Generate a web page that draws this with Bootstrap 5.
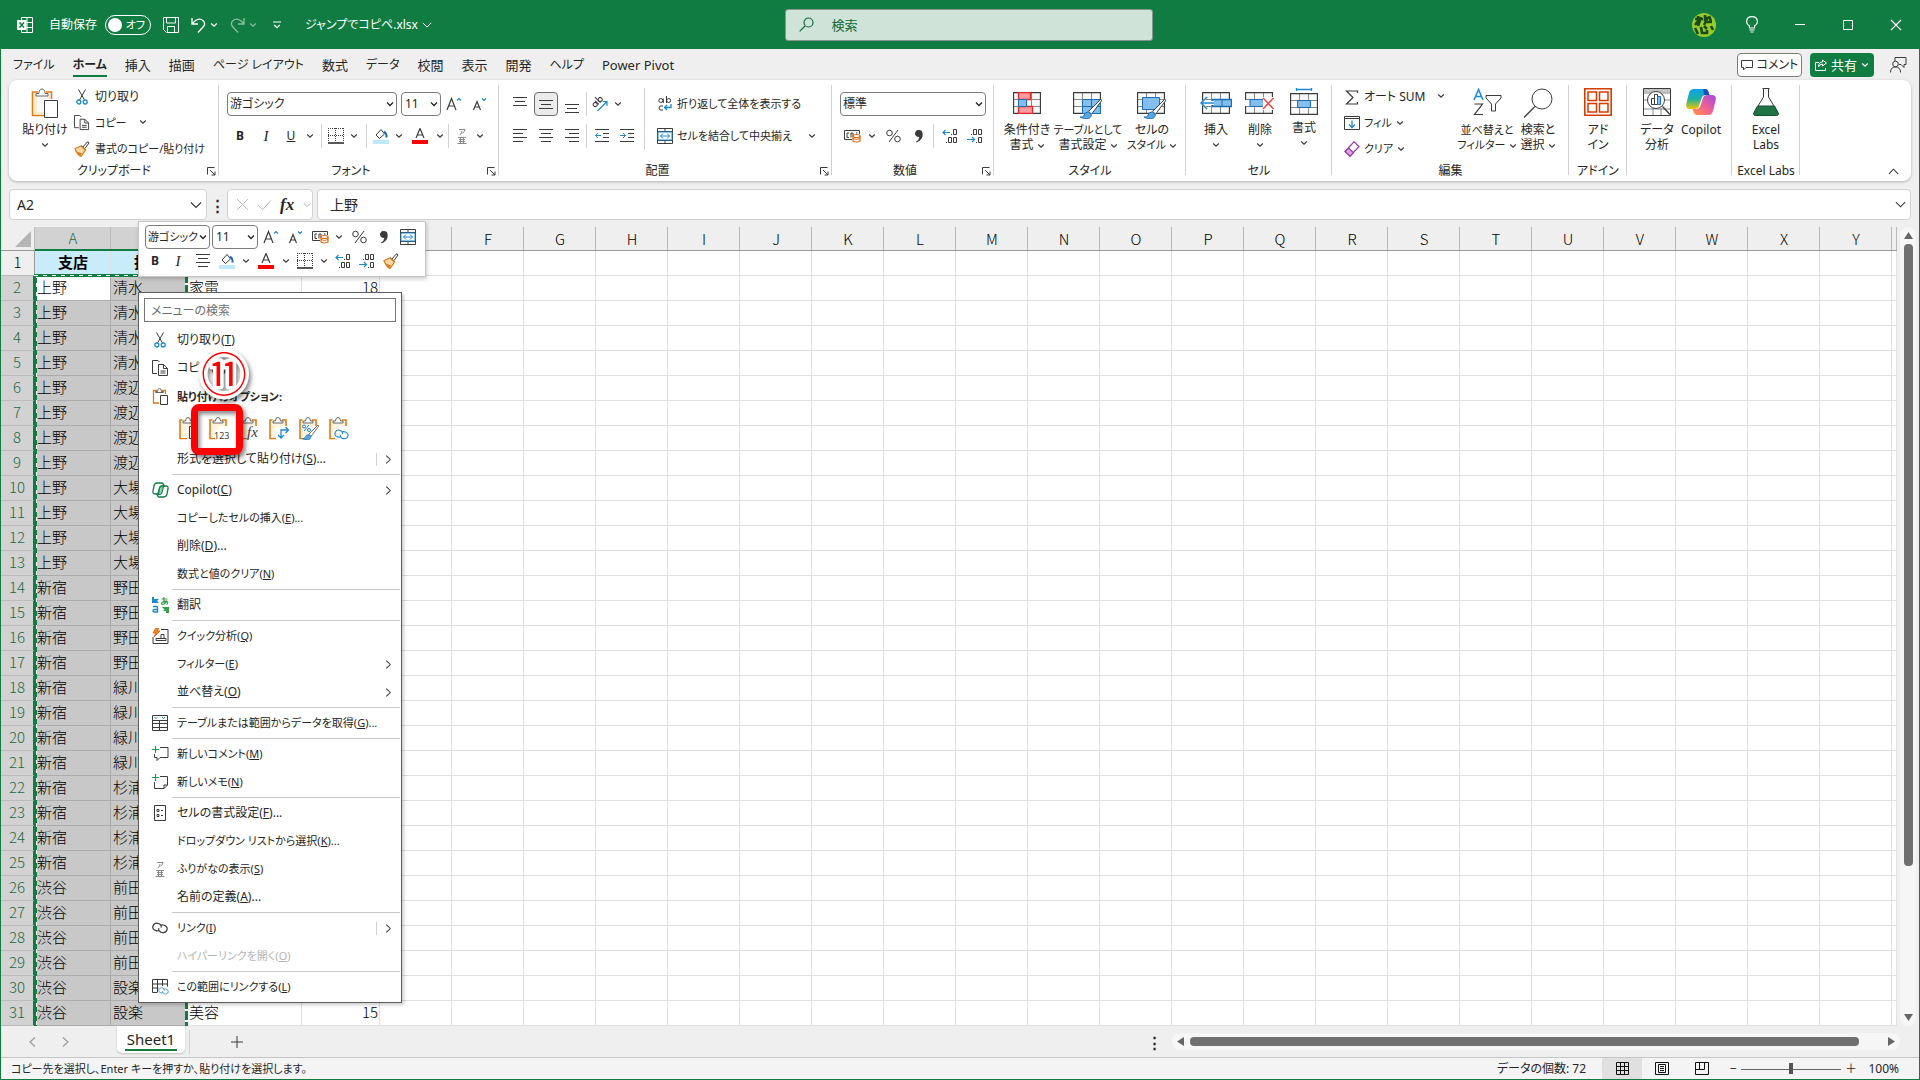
<!DOCTYPE html>
<html lang="ja">
<head>
<meta charset="utf-8">
<meta name="viewport" content="width=device-width, initial-scale=1">
<title>ジャンプでコピペ.xlsx - Excel</title>
<link href="https://cdn.jsdelivr.net/npm/bootstrap@5.3.0/dist/css/bootstrap.min.css" rel="stylesheet">
<style>
:root{--xl:#107c41;--ink:#262626;--line:#d1d1d1;--blue:#1e88d0}
body{font:12px/16px "Noto Sans","Noto Sans CJK JP",sans-serif;font-feature-settings:"palt";color:var(--ink);background:#efefef;overflow-x:hidden}
button{font:inherit;font-feature-settings:inherit;color:inherit;background:none;border:0;padding:0}
svg{display:block;flex:none;overflow:visible;fill:none;stroke:#3b3b3b}
svg.blu{stroke:#1e88d0}
svg text{stroke:none;fill:#3b3b3b}
a{color:inherit;text-decoration:none}
.tight{font-size:11px}
.g12{margin-left:12px}
.side{flex:1 1 0}
.window-frame{min-height:100vh;border:1px solid var(--xl);border-top:0;position:relative}
.titlebar{background:var(--xl);color:#fff;height:49px;margin:0 -1px;padding-left:17px}
.titlebar svg{stroke:#fff}
.switch-label{width:46px;height:20px;border:1px solid #fff;border-radius:10px;padding:0 5px 0 2px}
.switch-label input{appearance:none;width:14px;height:14px;border-radius:50%;background:#fff;margin:0}
.title-search{width:368px;height:32px;border:1px solid #87958d;border-radius:3px;background:#cfe3d8;color:#106b3a;padding:0 13px}
.title-search input{border:0;background:none;outline:0;width:280px;color:#106b3a;font-size:13px;font-feature-settings:inherit}
.title-search input::placeholder{color:#106b3a;opacity:1}
.title-search svg{stroke:#106b3a}
.win-btn{width:48px;height:48px}
.tabs{height:31px;padding:0 8px 0 12px}
.tabs .nav{column-gap:18px}
.tabs .nav-link{padding:0;height:28px;line-height:32px;font-size:13px;color:var(--ink)}
.tabs .nav-link.kana{font-size:12px}
.tabs .nav-link.active{font-weight:700;border-bottom:2px solid var(--xl)}
.top-btn{height:24px;border-radius:4px}
.comment-btn{border:1px solid #7d7d7d;background:#fff;width:65px}
.share-btn{background:var(--xl);color:#fff;width:64px;font-size:13px}
.share-btn svg{stroke:#fff}
.ribbon{background:#fff;border-radius:8px;height:101px;margin:0 8px;box-shadow:0 1px 3px #0004}
.rgroup{position:relative;padding-top:4px}
.rgroup::after{content:"";position:absolute;right:0;top:5px;height:90px;border-right:1px solid var(--line)}
.rbody{height:78px}
.rlabel{height:17px;line-height:17px}
.launcher{position:absolute;right:3px;top:87px}
.w-clip{width:210px}.w-font{width:280px}.w-align{width:333px}.w-num{width:162px}.w-style{width:192px}.w-cell{width:146px}.w-edit{width:237px}.w-addin{width:58px}.w-data{width:105px}.w-labs{width:68px}
.big-btn{line-height:15px;text-align:center;display:flex;flex-direction:column;align-items:center;padding-top:4px;white-space:nowrap}
.big-btn .lbl{margin-top:4px}
.big-btn .lbl2{margin-top:6px}
.bw-l{width:64px}.bw-m{width:58px}.bw-s{width:44px}
.edit-col{width:118px}
.row-btn{display:flex;align-items:center;gap:4px;height:26px;white-space:nowrap}
.tool-row{display:flex;align-items:center;height:32px}
.ib{width:26px;height:24px;display:flex;align-items:center;justify-content:center;flex:none}
.ib20{width:20px}.ib24{width:24px}
.cv{width:16px;height:24px;display:flex;align-items:center;justify-content:center;flex:none}
.cv.slim{width:14px}
.ib.on{border:1px solid #6b6b6b;border-radius:4px;background:#ebebeb;width:24px;margin:0 1px}
.ib.ital{font:italic 15px "Liberation Serif",serif}
.vsep{width:9px;height:24px;flex:none;background:linear-gradient(var(--line),var(--line)) 4px 0/1px 100% no-repeat}
.vsep.slim{width:5px;background-position:1px 0}
.vsep.tall{height:62px}
.combo{height:24px;border:1px solid #7d7d7d;border-radius:4px;background:#fff url("data:image/svg+xml,%3Csvg xmlns='http://www.w3.org/2000/svg' viewBox='0 0 8 8'%3E%3Cpath d='M1 2.5 4 5.500 7 2.500' fill='none' stroke='%23222' stroke-width='1.300'/%3E%3C/svg%3E") right 2px center/8px 8px no-repeat;appearance:none;padding:0 10px 0 2px;font-size:12px;line-height:20px;color:var(--ink);font-feature-settings:inherit}
.c-font{width:170px}.c-size{width:40px;padding-left:3px}.c-num{width:146px}.c-mini{width:67px;font-size:11px}.c-msize{width:50px;padding-left:3px;margin-left:2px}
.fbar{padding:8px 8px 7px}
.fbox{background:#fff;border:1px solid var(--line);border-radius:4px;height:31px}
.namebox{width:198px;padding:0 4px 0 7px}
.fdots{width:20px;text-align:center;font-weight:700;font-size:15px}
.fxbox{width:86px;padding:0 1px 0 8px}
.fxmark{font:italic 700 17px "Liberation Serif",serif}
.fbox input{border:0;outline:0;background:none;font-size:14px;min-width:0;padding:0;color:var(--ink)}
.sheet-area{position:relative;min-width:0}
.grid{table-layout:fixed;width:100%;border-collapse:separate;border-spacing:0;font-size:15px;line-height:20px;background:#fff;font-family:"Noto Sans CJK JP",sans-serif;font-feature-settings:normal;color:#000}
.grid th,.grid td{height:25px;padding:0 1px 2px 2px;border-right:1px solid #e0e0e0;border-bottom:1px solid #e0e0e0;font-weight:300;overflow:hidden;white-space:nowrap}
.grid thead th{height:24px;text-align:center;background:linear-gradient(#bbb,#bbb) right/1px 100% no-repeat #efefef;border-right:0;border-bottom:1px solid #9a9a9a;padding:0}
.grid thead th.hot{background-color:#d2d2d2;border-bottom:2px solid var(--xl);color:#1e6b45}
.grid tbody th{text-align:center;background:#efefef;border-right:1px solid #9a9a9a;border-bottom-color:#bbb;padding:0 0 2px}
.grid tbody tr.hot th{background:#d2d2d2;color:#1e6b45;border-right:2px solid var(--xl)}
.grid tr.hot td.sel{background:#c8c8c8;border-color:#acacac}
.grid tr.hot td.cur{background:#fff}
.grid td.cap{background:#c9ecfb;text-align:center;font-weight:700}
.k-rh{width:34px}.k-a{width:76px}.k-c{width:115px}.k-d{width:78px}.k-n{width:72px}
.ants{position:absolute;left:33px;top:47px;width:154px;bottom:0;pointer-events:none;background:
 repeating-linear-gradient(90deg,#fff 0 4px,#107c41 4px 9px) 0 1px/100% 1px no-repeat,
 linear-gradient(#107c41,#107c41) 0 0/100% 3px no-repeat,
 repeating-linear-gradient(#fff 0 4px,#107c41 4px 9px) 2px 0/1px 100% no-repeat,
 linear-gradient(#107c41,#107c41) 0 0/3px 100% no-repeat,
 repeating-linear-gradient(#107c41 0 9px,#fff 9px 11px) 100% 0/3px 100% no-repeat}
.vscroll{width:22px;flex:none}
.vtrack{width:16px;border-radius:8px;background:#f6f6f6}
.vthumb{width:9px;border-radius:4px;background:#707070;flex:0 0 622px}
.sheetbar{height:31px}
.nav-l{margin-left:28px}.nav-r{margin-left:26px}.nav-add{margin-left:37px}
.sheet-tab{background:#fff;border-radius:0 0 5px 5px;width:68px;height:27px;box-shadow:0 1px 2px #0003;font-size:15px;line-height:20px}
.sheet-tab span{border-bottom:2px solid var(--xl);padding:0 2px}
.hscroll{width:728px;height:17px;border-radius:8px;background:#f6f6f6;margin-right:19px;padding:0 5px}
.hthumb{height:9px;border-radius:4px;background:#707070;width:669px;margin-left:6px}
.statusbar{height:22px;border-top:1px solid #c6c6c6;background:#f4f4f4;padding:0 20px 0 10px}
.view-btn{width:40px;height:21px;display:flex;align-items:center;justify-content:center}
.view-btn.on{background:#e0e0e0}
.zoom-range{appearance:none;width:100px;height:12px;background:linear-gradient(#666,#666) 0 6px/100% 1px no-repeat;margin:0 4px}
.zoom-range::-webkit-slider-thumb{appearance:none;width:4px;height:11px;background:#555}
.pct-label{width:34px}
.mini{position:absolute;left:137px;top:221px;width:288px;height:56px;background:#fff;border:1px solid #c6c6c6;box-shadow:1px 2px 4px #0003;padding:3px 5px 0 6px;z-index:3}
.mini-row{display:flex;align-items:center;height:24px}
.ctx{position:absolute;left:137px;top:292px;width:264px;background:#fff;border:1px solid #5e5e5e;box-shadow:2px 2px 3px #0003;padding:5px 1px 1px 5px;z-index:4}
.ctx-search{width:252px;height:24px;border:1px solid #767676;padding:0 6px;font-size:12px;margin-bottom:4px;display:block;font-feature-settings:inherit;outline:0}
.ctx-search::placeholder{color:#6e6e6e;opacity:1}
.mi{display:flex;align-items:center;height:28px;width:100%;text-align:left;white-space:nowrap}
.mi.head{height:30px;font-weight:700;font-size:11px}
.mi .ic{width:33px;height:20px;flex:none;display:flex;align-items:center;justify-content:center;padding-right:1px}
.mi .go{margin-left:auto;padding-right:8px;display:flex;gap:8px;align-items:center}
.mi .go.split::before{content:"";height:13px;border-left:1px solid var(--line)}
.mi[disabled]{color:#b5b5b5}
.mhr{height:3px;margin-left:28px;background:linear-gradient(#c9c9c9,#c9c9c9) 0 1px/100% 1px no-repeat}
.opts{display:flex;gap:10px;height:33px;padding-left:35px}
.mark-box{position:absolute;left:190px;top:404px;width:52px;height:51px;border:7px solid #f00;border-radius:8px;box-shadow:2px 3px 5px #0008,inset 2px 3px 4px #0007;z-index:5}
.mark-num{position:absolute;left:198px;top:349px;z-index:6;filter:drop-shadow(2px 3px 2px #0007)}
.mark-num text{font:400 46px "Noto Sans CJK JP",sans-serif;fill:#f00;stroke:#fff;stroke-width:7px;stroke-linejoin:round;paint-order:stroke}
</style>
</head>
<body>
<svg width="0" height="0" class="position-absolute">
<defs>
<linearGradient id="cpA" x1="0" y1="0" x2="0" y2="1"><stop offset="0" stop-color="#0aa2e8"/><stop offset=".5" stop-color="#1cb0a0"/><stop offset="1" stop-color="#f3c500"/></linearGradient>
<linearGradient id="cpB" x1="1" y1="0" x2="0" y2="1"><stop offset="0" stop-color="#a049e8"/><stop offset=".55" stop-color="#f2638c"/><stop offset="1" stop-color="#ff9a45"/></linearGradient>
<symbol id="cv" viewBox="0 0 8 8"><path d="M1.200 2.500 4 5.200 6.800 2.500" stroke-width="1.200"/></symbol>
<symbol id="cvb" viewBox="0 0 12 12"><path d="M1 3.500 6 8.500 11 3.500" stroke-width="1.200"/></symbol>
<symbol id="cvr" viewBox="0 0 8 12"><path d="M1.500 1.500 6 6 1.500 10.500" stroke-width="1.200"/></symbol>
<symbol id="launch" viewBox="0 0 9 9"><path d="M.5 7.500v-7h7M3 3l5 5M8 4.500V8H4.500"/></symbol>
<symbol id="board" viewBox="0 0 28 30"><path d="M7 4H1.500v23.500H13M15 4h5.500v7" stroke="#e07b14" stroke-width="1.600"/><path d="M3 6h16v5h-6v15H3z" fill="#fdebc8" stroke="none"/><path d="M6 8h10v3h-3v13H6z" fill="#fafafa" stroke="none"/><path d="M5 8V5.500h3Q8 1 11 1t3 4.500h3V8z" fill="#fff" stroke="#666"/><path d="M13.500 12.500h13v17h-13z" fill="#fff"/></symbol>
<symbol id="board-s" viewBox="0 0 17 18"><path d="M5 2.500H1.500V15H7M10 2.500h3.500V6" stroke="#e07b14" stroke-width="1.300"/><path d="M3.500 4.500v-1h2Q5.500.500 7.500.500t2 3h2v1z" fill="#fff" stroke="#666"/><path d="M8.500 7.500h7v9h-7z" fill="#fff"/></symbol>
<symbol id="clip" viewBox="0 0 20 23"><path d="M3.500 3H1v18.500h7M13 3h4v6" stroke="#e07b14" stroke-width="1.600"/><path d="M2 5h14v4h-6v12H2z" fill="#fff4e0" stroke="none"/><path d="M4 6V4h2.500Q6.500.500 9 .500T11.500 4H14v2z" fill="#fff" stroke="#666"/></symbol>
<symbol id="cut" viewBox="0 0 12 16"><path d="M2.500.500 8.500 11M9.500.500 3.500 11"/><circle cx="2.800" cy="13" r="2" stroke="#1e88d0" stroke-width="1.300"/><circle cx="9.200" cy="13" r="2" stroke="#1e88d0" stroke-width="1.300"/></symbol>
<symbol id="copy" viewBox="0 0 17 17"><path d="M5 13.500H.500V.500h5.500l1.500 1.500"/><path d="M6.500 4.500h5l4 4v7h-9z" fill="#fff"/><path d="M11.500 4.500v4h4M8.500 11h5M8.500 13h5"/></symbol>
<symbol id="brush" viewBox="0 0 16 16"><path d="M9 6 13 1.200q1.500-1 2 .800L11 7.500M7 4.500l5 4.500" /><path d="M7 5 1 7.500q2 6 6 8L11.500 9z" fill="#fbd9a8" stroke="#dc7a17" stroke-width="1.200"/><path d="M3 10.500 8 12.500 6.500 15Q4 13.500 3 10.500z" fill="#dc7a17" stroke="none"/></symbol>
<symbol id="Aup" viewBox="0 0 16 14"><path d="M1 13 5.500 1.500 10 13M2.700 9h5.600" stroke-width="1.200"/><path d="M11 3.500 13 1.500 15 3.500" stroke="#1e88d0" stroke-width="1.200"/></symbol>
<symbol id="Adn" viewBox="0 0 16 14"><path d="M1.500 13 5 4.500 8.500 13M2.800 10h4.400" stroke-width="1.200"/><path d="M10 1.500 12 3.500 14 1.500" stroke="#1e88d0" stroke-width="1.200"/></symbol>
<symbol id="border" viewBox="0 0 16 16"><path d="M.5 0v14M15.500 0v14M0 .500h16M7.500 0v14M0 7.500h16" stroke-dasharray="1 1"/><path d="M0 15h16" stroke="#111" stroke-width="1.400"/></symbol>
<symbol id="fill" viewBox="0 0 16 16"><path d="M3 7 8 1.500 11.500 6 6.500 10.500z"/><path d="M11 3.500q3 2 2.500 6" stroke="#1b6db5" stroke-width="2"/><path d="M0 12h16v4H0z" fill="#bfe8fa" stroke="none"/></symbol>
<symbol id="fcol" viewBox="0 0 16 16"><path d="M4 10 8 .500 12 10M5.500 7h5" stroke-width="1.200"/><path d="M0 12h16v4H0z" fill="#f00" stroke="none"/></symbol>
<symbol id="ruby" viewBox="0 0 10 16"><path d="M2 1.500h6Q8 4 5.500 5M5 3q0 3-2.500 4M1 9.500h8M2 11.500h6M2 13.500h6M.500 15.500h9M3.500 9.500v6M6.500 9.500v6" stroke="#888"/></symbol>
<symbol id="al-t" viewBox="0 0 14 14"><path d="M0 .500h14M2 4.500h10M0 8.500h14"/></symbol>
<symbol id="al-m" viewBox="0 0 14 9"><path d="M0 .500h14M2 4.500h10M0 8.500h14"/></symbol>
<symbol id="al-l" viewBox="0 0 14 14"><path d="M0 .500h14M0 4.500h10M0 8.500h14M0 12.500h10"/></symbol>
<symbol id="al-c" viewBox="0 0 14 14"><path d="M0 .500h14M2 4.500h10M0 8.500h14M2 12.500h10"/></symbol>
<symbol id="al-r" viewBox="0 0 14 14"><path d="M0 .500h14M4 4.500h10M0 8.500h14M4 12.500h10"/></symbol>
<symbol id="ind-l" viewBox="0 0 14 14"><path d="M0 .500h14M8 4.500h6M8 8.500h6M0 12.500h14"/><path d="M6 6.500H.500M3 4 .500 6.500 3 9" stroke="#1e88d0"/></symbol>
<symbol id="ind-r" viewBox="0 0 14 14"><path d="M0 .500h14M8 4.500h6M8 8.500h6M0 12.500h14"/><path d="M0 6.500h5.500M3 4l2.500 2.500L3 9" stroke="#1e88d0"/></symbol>
<symbol id="orient" viewBox="0 0 16 16"><g transform="rotate(-45 5 6)"><circle cx="2" cy="6.500" r="2"/><path d="M4.500 4v5M7 1v8"/><circle cx="9" cy="6.500" r="2"/></g><path d="M5.500 15 15 5.500M10.500 5.500H15V10" stroke="#1e88d0" stroke-width="1.200"/></symbol>
<symbol id="wrap" viewBox="0 0 14 16"><circle cx="2.800" cy="4.500" r="2"/><path d="M5.300 2.500v4.500M8.500 0v7M5 10q-4-1-4 2t4 2"/><circle cx="10.700" cy="4.500" r="2"/><path d="M13 8v3.500H6.500M9 9l-2.500 2.500L9 14" stroke="#1e88d0" stroke-width="1.300"/></symbol>
<symbol id="merge" viewBox="0 0 16 16"><path d="M.500.500h15v15H.500zM.500 3.500h15M.500 12.500h15M8 .500v3M8 12.500v3"/><path d="M1 4h14v8H1z" fill="#fff" stroke="#1e88d0"/><path d="M3.500 8h9M6 5.500 3.500 8 6 10.500M10 5.500 12.500 8 10 10.500" stroke="#1e88d0"/></symbol>
<symbol id="money" viewBox="0 0 17 14"><path d="M8 10.500H.500V1.500h15V5"/><path d="M5 4H3v4.500h2M7 8.500V4h2v4M12 4h1.500"/><path d="M9 7v5q3.500 2 7 0V7" fill="#fff" stroke="#dc6a10" stroke-width="1.200"/><ellipse cx="12.500" cy="7" rx="3.500" ry="1.500" fill="#fff" stroke="#dc6a10" stroke-width="1.200"/><path d="M9 9.500q3.500 2 7 0" stroke="#dc6a10"/></symbol>
<symbol id="pct" viewBox="0 0 15 14"><circle cx="3.500" cy="4" r="2.800"/><circle cx="11.500" cy="10" r="2.800"/><path d="M12 1 3 13"/></symbol>
<symbol id="comma" viewBox="0 0 8 13"><path d="M4 0a3.500 3.500 0 1 0 .500 6.800Q4 10 1 11.500l.500 1Q8 10 7.700 4 7.500 0 4 0z" fill="#3b3b3b" stroke="none"/></symbol>
<symbol id="dec-l" viewBox="0 0 16 16"><path d="M8 4.500H1M3.500 2 1 4.500 3.500 7" stroke="#1e88d0" stroke-width="1.200"/><path d="M11.500 1.500h3v5h-3zM6.500 9.500h3v5h-3zM11.500 9.500h3v5h-3zM9 6.500h1M4 14.500h1"/></symbol>
<symbol id="dec-r" viewBox="0 0 16 16"><path d="M0 11.500h7M5 9l2.500 2.500L5 14" stroke="#1e88d0" stroke-width="1.200"/><path d="M6.500 1.500h3v5h-3zM11.500 1.500h3v5h-3zM11.500 9.500h3v5h-3zM4 6.500h1M9 14.500h1"/></symbol>
<symbol id="tbl" viewBox="0 0 28 22"><path d="M.500.500h27v21H.500z" fill="#fafafa" stroke="none"/><path d="M1 7.500h26M1 14.500h26M9.500 1v20M18.500 1v20" stroke="#8a8a8a"/><path d="M.500.500h27v21H.500z" stroke-width="1.300"/></symbol>
<symbol id="pbrush" viewBox="0 0 24 22"><path d="M21.500 1.500 9 14l3 3L22.500 3q.500-1.500-1-1.500z" fill="#fff"/><path d="M8.500 14.500q-4 .500-4.500 4-1.500 2-4 1.500 7 3.500 10.500.500 2-2 1-4z" fill="#5ba6e0" stroke="#1b6db5"/></symbol>
<symbol id="cond" viewBox="0 0 28 22"><use href="#tbl"/><path d="M5.500.500h12v7h-12zM5.500 14.500h14v7h-14z" fill="#ff9aa0" stroke="#e02a2a" stroke-width="1.300"/><path d="M5.500 7.500h8v7h-8z" fill="#83beec" stroke="#1b6db5"/></symbol>
<symbol id="tfmt" viewBox="0 0 31 28"><svg width="28" height="22"><use href="#tbl"/></svg><path d="M9.500 7.500h18v14h-18z" fill="#83beec" stroke="#1b6db5"/><path d="M9.500 14.500h18M18.500 7.500v14" stroke="#1b6db5"/><svg x="7" y="6" width="23" height="21"><use href="#pbrush"/></svg></symbol>
<symbol id="cfmt" viewBox="0 0 31 28"><svg width="28" height="22"><use href="#tbl"/></svg><path d="M5.500 5.500h17v12h-17z" fill="#83beec" stroke="#1b6db5"/><svg x="7" y="6" width="23" height="21"><use href="#pbrush"/></svg></symbol>
<symbol id="cins" viewBox="0 0 32 22"><svg x="2" width="28" height="22"><use href="#tbl"/></svg><path d="M12.500 7.500h19v7h-19z" fill="#83beec" stroke="#1b6db5" stroke-width="1.300"/><path d="M22 7.500v7" stroke="#1b6db5"/><path d="M14 9H6V5L0 11l6 6v-4h8z" fill="#fff" stroke="none"/><path d="M14 11H1M7 5 1 11l6 6" stroke="#1e88d0" stroke-width="1.500"/></symbol>
<symbol id="cdel" viewBox="0 0 30 22"><svg width="28" height="22"><use href="#tbl"/></svg><path d="M0 8h5v6H0z" fill="#fff" stroke="none"/><path d="M5 7.500h12l3.500 3.500-3.500 3.500H5z" fill="#83beec" stroke="#1b6db5"/><path d="M18 5h11v13H18z" fill="#fff" stroke="none"/><path d="M18 6 28.500 17M28.500 6 18 17" stroke="#f04848" stroke-width="1.500"/></symbol>
<symbol id="cform" viewBox="0 0 28 28"><svg y="5" width="28" height="22"><use href="#tbl"/></svg><path d="M7.500 12.500h13v7h-13z" fill="#83beec" stroke="#1b6db5"/><path d="M6.500 1.500h15M6.500 0v3M21.500 0v3" stroke="#1e88d0" stroke-width="1.300"/></symbol>
<symbol id="sigma" viewBox="0 0 14 15"><path d="M12.500 3V1H1.500L8 7.500 1.500 14h11v-2" stroke-width="1.200"/></symbol>
<symbol id="fdown" viewBox="0 0 16 14"><path d="M.500.500h15v13H.500zM.500 2.500h15"/><path d="M8 4.500V11M5 8.500 8 11.500l3-3" stroke="#1e88d0" stroke-width="1.300"/></symbol>
<symbol id="erase" viewBox="0 0 16 16"><path d="M10 .800 15 5.500 6 15.200 1 10.500z" stroke="#9a3ca3" stroke-width="1.200"/><path d="M4.500 7 9.500 11.700 6 15.200 1 10.500z" fill="#d9a8dd" stroke="#9a3ca3" stroke-width="1.200"/></symbol>
<symbol id="sort" viewBox="0 0 29 28"><path d="M1 12 5.500 1.500 10 12M2.500 8.500h6" stroke="#1e88d0" stroke-width="1.500"/><path d="M1.500 16h8l-8 10.500h8.500" stroke-width="1.200"/><path d="M13 7.500h15v2.500l-5.500 6v7h-4v-7L13 10z"/></symbol>
<symbol id="find" viewBox="0 0 30 30"><circle cx="19" cy="11" r="10"/><path d="M12 18.500 1 29.500" stroke-width="1.300"/></symbol>
<symbol id="addin" viewBox="0 0 28 28"><path d="M.800.800h26.400v26.400H.800z" stroke="#d83b01" stroke-width="1.600"/><path d="M4 4h8.500v8.500H4zM15.500 4H24v8.500h-8.500zM4 15.500h8.500V24H4zM15.500 15.500H24V24h-8.500z" stroke="#d83b01" stroke-width="1.500"/></symbol>
<symbol id="anal" viewBox="0 0 28 28"><path d="M.500.500h27v27H.500z" fill="#fff"/><path d="M1 1h26v3.500H1z" fill="#c4c4c4" stroke="none"/><path d="M1 5h26M1 12h26M1 21h26M10 20v7M18 20v7" stroke="#888"/><circle cx="13" cy="12" r="8.500" fill="#fff"/><path d="M19.500 18.500 27 26.500" stroke-width="1.400"/><path d="M8.500 10.500h3v6h-3zM11.500 6.500h3v10h-3z"/><path d="M14.500 8.500h3v8h-3z" fill="#83beec" stroke="#1b6db5"/></symbol>
<symbol id="copi" viewBox="0 0 30 28"><path d="M8 1h11q2.500 0 3.500 3l1 3h-4q-3 0-4 3.500L13 18q-1 3-4 3H4q-5 0-3.500-6L3 5Q4 1 8 1z" fill="url(#cpA)" stroke="none"/><path d="M22 27H11q-2.500 0-3.500-3l-1-3h4q3 0 4-3.500L17 10q1-3 4-3h5q5 0 3.500 6L27 23q-1 4-5 4z" fill="url(#cpB)" stroke="none"/><path d="M17 1h2q2.500 0 3.500 3l1 3H18z" fill="#1b4fc0" stroke="none"/></symbol>
<symbol id="flask" viewBox="0 0 26 28"><path d="M9.500.500h7M10.500.500V9L2 23M15.500.500V9L24 23"/><path d="M4.500 18h17l4 7.500q0 2-2 2h-21q-2 0-2-2z" fill="#217346" stroke="#174f31"/></symbol>
<symbol id="cop-s" viewBox="0 0 17 16"><path d="M5 1h5q1 0 1.500 1.500L12 4H9.500Q8 4 7.500 6L6.500 10Q6 12 4 12H3Q.500 12 1 9L2 4Q2.500 1 5 1zM12 15H7q-1 0-1.500-1.500L5 12h2.500Q9 12 9.500 10l1-4Q11 4 13 4h1q2.500 0 2 3l-1 5q-.500 3-3.500 3z" stroke="#107c41" stroke-width="1.300"/><path d="M7.500 6 11 3v4l-1.500 5-3 1z" fill="#8fd0a8" stroke="#107c41"/></symbol>
<symbol id="trans" viewBox="0 0 17 16"><path d="M0 0h2v2h5L5 4l2 2H0z" fill="#1e88d0" stroke="none"/><path d="M1 9.500h3.500q1 0 1 1.500v4H2.500q-1.500 0-1.500-1.200T2.500 12.500h3" stroke="#1e88d0" stroke-width="1.400"/><path d="M9.500 2h6M12 0q-.500 4 .500 7M15 3.500Q13 7.500 10.500 7.500 9 7 10 5.500q3-2 5-1 1.500 1.500-.500 3" stroke="#37a04a" stroke-width="1.200"/><path d="M10 10h7v6h-3v-2h-3l1.500-1.500z" fill="#37a04a" stroke="none"/></symbol>
<symbol id="quick" viewBox="0 0 17 16"><path d="M9 1.500h7v14H1V9M4 10.500v2h10v-2zM9 10V6.500h3V10"/><path d="M4 0 1 5h3L2 9l6-6H5l2-3z" fill="#ef8b1f" stroke="#dc6a10"/></symbol>
<symbol id="tget" viewBox="0 0 16 16"><path d="M.500.500h15v15H.500zM.500 5.500h15M.500 8.500h15M.500 12.500h15M7.500 5v10"/><path d="M2.500 2 4 3.500 5.500 2M10 2l1.500 1.500L13 2" stroke="#1e88d0"/></symbol>
<symbol id="ncom" viewBox="0 0 17 16"><path d="M8 1.500h8v10H8l-3 3v-3H2.500V8"/><path d="M3.500 0v7M0 3.500h7" stroke="#1d9a4b" stroke-width="1.200"/></symbol>
<symbol id="nmemo" viewBox="0 0 17 16"><path d="M8 2.500h7.500V11L12 14.500H2.500V8M15.500 11H12v3.500"/><path d="M3.500 0v7M0 3.500h7" stroke="#1d9a4b" stroke-width="1.200"/></symbol>
<symbol id="cellf" viewBox="0 0 12 16"><path d="M.500.500h11v15H.500zM3 4.500h2v2H3zM3 9.500h2v2H3zM7 5.500h2M7 10.500h2"/></symbol>
<symbol id="link" viewBox="0 0 16 12"><path d="M7.500 8.200Q6 9.200 4.200 8.700C1.500 8 .200 6 1 4S3.800.800 6 1.300 9.700 3.600 9 5.600M8.200 3.500q1.500-1 3.300-.500C14.300 3.700 15.700 5.800 15 7.800S12 11 9.800 10.500 6.200 8.200 6.800 6.200" stroke-width="1.200"/></symbol>
<symbol id="rlink" viewBox="0 0 17 16"><path d="M5 13.500H.500V.500h15v7M.500 5h15M.500 9h6M5.500.500v13M10.500.500V7"/><svg class="blu" x="6" y="8" width="11" height="8"><use href="#link"/></svg></symbol>
</defs></svg>

<div class="window-frame d-flex flex-column">
<header class="titlebar d-flex align-items-center">
 <div class="side d-flex align-items-center">
  <svg width="16" height="16" viewBox="0 0 16 16"><path d="M4.500 3V.500h11v15h-11V13M4.500 5.500h11M9.500 10.500h6M10 .500v15M4.500 10.500h11"/><path d="M0 3h9.500v10H0z" fill="#fff" stroke="none"/><path d="M2.500 5.500 7 10.500M7 5.500 2.500 10.500" style="stroke:#107c41" stroke-width="1.500"/></svg>
  <span class="ms-3">自動保存</span>
  <label class="switch-label d-flex align-items-center justify-content-between ms-2"><input type="checkbox" aria-label="自動保存"><span class="tight">オフ</span></label>
  <button class="g12" aria-label="保存"><svg width="16" height="16" viewBox="0 0 16 16"><path d="M.500.500h15v15h-12l-3-3zM3.500.500V6h9V.500M4.500 15.500V9.500h7v6"/></svg></button>
  <button class="g12" aria-label="元に戻す"><svg width="15" height="16" viewBox="0 0 15 16"><path d="M1 1v6h6M1.500 6.500Q6 1 10.500 2.500q5 3 2 7L7 15.500" stroke-width="1.300"/></svg></button>
  <button class="cv" aria-label="元に戻す履歴"><svg width="8" height="8"><use href="#cv"/></svg></button>
  <span class="d-flex opacity-50 ms-2 align-items-center"><button aria-label="やり直し"><svg width="15" height="16" viewBox="0 0 15 16"><path d="M14 1v6H8M13.500 6.500Q9 1 4.500 2.500q-5 3-2 7L8 15.500" stroke-width="1.300"/></svg></button>
  <button class="cv" aria-label="やり直し履歴"><svg width="8" height="8"><use href="#cv"/></svg></button></span>
  <button class="g12" aria-label="クイック アクセスのカスタマイズ"><svg width="8" height="8" viewBox="0 0 8 8"><path d="M0 1h8M1.200 4 4 6.700 6.800 4" stroke-width="1.200"/></svg></button>
  <button class="d-flex align-items-center gap-1 ms-4">ジャンプでコピペ.xlsx<svg width="10" height="10"><use href="#cvb"/></svg></button>
 </div>
 <label class="title-search d-flex align-items-center gap-3"><svg width="15" height="15" viewBox="0 0 15 15"><circle cx="9.500" cy="5.500" r="4.500" stroke-width="1.200"/><path d="M6 9 .700 14.300" stroke-width="1.200"/></svg><input type="search" placeholder="検索" aria-label="検索"></label>
 <div class="side d-flex align-items-center justify-content-end">
  <button class="me-2 pe-1" aria-label="アカウント"><svg width="24" height="24" viewBox="0 0 24 24"><circle cx="12" cy="12" r="12" fill="#9acb2c" stroke="none"/><path d="M6 3v5l-3 4M3 6h8M9 4l-3 9M13 2v6M12 5h6M17 3l2 5M13 9h7M15 6l-3 6M3 15l3 6M9 14l1 6h5v-3M12 13l3 3M19 13l2 4" style="stroke:#184a17" stroke-width="2.600"/></svg></button>
  <button class="win-btn d-flex align-items-center justify-content-center" aria-label="ヒント"><svg width="12" height="17" viewBox="0 0 12 17"><path d="M3.500 12V10Q.500 8 .500 5.500 1 .700 6 .700T11.500 5.500Q11.500 8 8.500 10v2zM3.500 14h5M4.500 16h3" stroke-width="1.200"/></svg></button>
  <button class="win-btn d-flex align-items-center justify-content-center" aria-label="最小化"><svg width="10" height="10" viewBox="0 0 10 10"><path d="M0 4.500h10"/></svg></button>
  <button class="win-btn d-flex align-items-center justify-content-center" aria-label="最大化"><svg width="10" height="10" viewBox="0 0 10 10"><path d="M.500.500h9v9h-9z"/></svg></button>
  <button class="win-btn d-flex align-items-center justify-content-center" aria-label="閉じる"><svg width="10" height="10" viewBox="0 0 10 10"><path d="M0 0l10 10M10 0 0 10" stroke-width="1.200"/></svg></button>
 </div>
</header>

<div class="tabs d-flex align-items-center">
 <nav class="nav flex-nowrap me-auto align-self-start">
  <a class="nav-link kana" href="#">ファイル</a><a class="nav-link kana active" href="#">ホーム</a><a class="nav-link" href="#">挿入</a><a class="nav-link" href="#">描画</a><a class="nav-link kana" href="#">ページ レイアウト</a><a class="nav-link" href="#">数式</a><a class="nav-link kana" href="#">データ</a><a class="nav-link" href="#">校閲</a><a class="nav-link" href="#">表示</a><a class="nav-link" href="#">開発</a><a class="nav-link kana" href="#">ヘルプ</a><a class="nav-link" href="#">Power Pivot</a>
 </nav>
 <button class="top-btn comment-btn d-flex align-items-center justify-content-center gap-1"><svg width="12" height="12" viewBox="0 0 12 12"><path d="M.500 1.500h11v7H5l-2.500 2.500V8.500h-2z"/></svg>コメント</button>
 <button class="top-btn share-btn d-flex align-items-center justify-content-center gap-1 ms-2"><svg width="12" height="12" viewBox="0 0 12 12"><path d="M4 3.500H.500v8h10V9M7.500 1l4 3-4 3V5Q5 5 3.500 8 3.500 3 7.500 3z"/></svg>共有<svg width="8" height="8"><use href="#cv"/></svg></button>
 <button class="ms-3 me-1" aria-label="共同作業"><svg width="17" height="16" viewBox="0 0 17 16"><path d="M5 4V.500h11v7h-2v3l-3-3H9"/><circle cx="5.500" cy="7" r="2.800"/><path d="M.500 15.500q0-5.500 5-5.500t5 5.500"/></svg></button>
</div>

<div class="ribbon d-flex">
 <section class="rgroup w-clip">
  <div class="rbody d-flex">
   <button class="big-btn bw-l ps-2"><svg width="28" height="30"><use href="#board"/></svg><span class="lbl">貼り付け</span><svg class="mt-1" width="8" height="8"><use href="#cv"/></svg></button>
   <div>
    <button class="row-btn"><svg width="18" height="16"><use href="#cut"/></svg>切り取り</button>
    <div class="d-flex"><button class="row-btn tight"><svg width="18" height="16"><use href="#copy"/></svg>コピー</button><button class="cv ms-2" aria-label="コピーのオプション"><svg width="8" height="8"><use href="#cv"/></svg></button></div>
    <button class="row-btn tight"><svg width="18" height="16"><use href="#brush"/></svg>書式のコピー/貼り付け</button>
   </div>
  </div>
  <div class="rlabel text-center">クリップボード</div><button class="launcher" aria-label="クリップボードの詳細"><svg width="9" height="9"><use href="#launch"/></svg></button>
 </section>
 <section class="rgroup w-font ps-2">
  <div class="rbody pt-1">
   <div class="tool-row"><select class="combo c-font" aria-label="フォント"><option>游ゴシック</option></select><select class="combo c-size ms-1" aria-label="サイズ"><option>11</option></select><button class="ib" aria-label="拡大"><svg width="16" height="14"><use href="#Aup"/></svg></button><button class="ib" aria-label="縮小"><svg width="16" height="14"><use href="#Adn"/></svg></button></div>
   <div class="tool-row"><button class="ib fw-bold">B</button><button class="ib ital">I</button><button class="ib ib24 text-decoration-underline">U</button><button class="cv slim" aria-label="下線"><svg width="8" height="8"><use href="#cv"/></svg></button><i class="vsep"></i><button class="ib ib20" aria-label="罫線"><svg width="16" height="16"><use href="#border"/></svg></button><button class="cv" aria-label="罫線の種類"><svg width="8" height="8"><use href="#cv"/></svg></button><i class="vsep"></i><button class="ib ib20" aria-label="塗りつぶし"><svg width="16" height="16"><use href="#fill"/></svg></button><button class="cv" aria-label="塗りつぶしの色"><svg width="8" height="8"><use href="#cv"/></svg></button><button class="ib" aria-label="文字色"><svg width="16" height="16"><use href="#fcol"/></svg></button><button class="cv slim" aria-label="文字色の選択"><svg width="8" height="8"><use href="#cv"/></svg></button><i class="vsep slim"></i><button class="ib ib20" aria-label="ふりがな"><svg width="10" height="16"><use href="#ruby"/></svg></button><button class="cv" aria-label="ふりがなの設定"><svg width="8" height="8"><use href="#cv"/></svg></button></div>
  </div>
  <div class="rlabel text-center pe-4">フォント</div><button class="launcher" aria-label="フォントの詳細"><svg width="9" height="9"><use href="#launch"/></svg></button>
 </section>
 <section class="rgroup w-align ps-2">
  <div class="rbody d-flex pt-1">
   <div>
    <div class="tool-row"><button class="ib" aria-label="上揃え"><svg width="14" height="14"><use href="#al-t"/></svg></button><button class="ib on" aria-label="上下中央揃え"><svg width="14" height="9"><use href="#al-m"/></svg></button><button class="ib pt-2" aria-label="下揃え"><svg width="14" height="9"><use href="#al-m"/></svg></button><i class="vsep slim"></i><button class="ib ib20" aria-label="方向"><svg width="16" height="16"><use href="#orient"/></svg></button><button class="cv" aria-label="方向の選択"><svg width="8" height="8"><use href="#cv"/></svg></button></div>
    <div class="tool-row"><button class="ib" aria-label="左揃え"><svg width="14" height="14"><use href="#al-l"/></svg></button><button class="ib" aria-label="中央揃え"><svg width="14" height="14"><use href="#al-c"/></svg></button><button class="ib" aria-label="右揃え"><svg width="14" height="14"><use href="#al-r"/></svg></button><i class="vsep slim"></i><button class="ib ib24" aria-label="インデントを減らす"><svg width="14" height="14"><use href="#ind-l"/></svg></button><button class="ib" aria-label="インデントを増やす"><svg width="14" height="14"><use href="#ind-r"/></svg></button></div>
   </div>
   <i class="vsep tall"></i>
   <div class="ps-1 ms-1">
    <div class="tool-row"><button class="row-btn tight"><svg width="16" height="16"><use href="#wrap"/></svg>折り返して全体を表示する</button></div>
    <div class="tool-row"><button class="row-btn tight"><svg width="16" height="16"><use href="#merge"/></svg>セルを結合して中央揃え</button><button class="cv g12" aria-label="結合の種類"><svg width="8" height="8"><use href="#cv"/></svg></button></div>
   </div>
  </div>
  <div class="rlabel text-center pe-4">配置</div><button class="launcher" aria-label="配置の詳細"><svg width="9" height="9"><use href="#launch"/></svg></button>
 </section>
 <section class="rgroup w-num ps-2">
  <div class="rbody pt-1">
   <div class="tool-row"><select class="combo c-num" aria-label="表示形式"><option>標準</option></select></div>
   <div class="tool-row"><button class="ib ib24" aria-label="通貨"><svg width="17" height="14"><use href="#money"/></svg></button><button class="cv" aria-label="通貨の選択"><svg width="8" height="8"><use href="#cv"/></svg></button><button class="ib" aria-label="パーセント"><svg width="15" height="14"><use href="#pct"/></svg></button><button class="ib" aria-label="桁区切り"><svg width="8" height="13"><use href="#comma"/></svg></button><i class="vsep slim"></i><button class="ib" aria-label="小数点以下を増やす"><svg width="16" height="16"><use href="#dec-l"/></svg></button><button class="ib ib24" aria-label="小数点以下を減らす"><svg width="16" height="16"><use href="#dec-r"/></svg></button></div>
  </div>
  <div class="rlabel text-center pe-4">数値</div><button class="launcher" aria-label="数値の詳細"><svg width="9" height="9"><use href="#launch"/></svg></button>
 </section>
 <section class="rgroup w-style">
  <div class="rbody d-flex ps-1">
   <button class="big-btn bw-m"><svg class="my-1" width="28" height="22"><use href="#cond"/></svg><span class="lbl">条件付き<br>書式 <svg class="d-inline" width="8" height="8"><use href="#cv"/></svg></span></button>
   <button class="big-btn bw-l"><svg class="mt-1" width="31" height="26" viewBox="0 0 31 26"><use href="#tfmt" width="31" height="28"/></svg><span class="lbl"><span class="tight">テーブルとして</span><br>書式設定 <svg class="d-inline" width="8" height="8"><use href="#cv"/></svg></span></button>
   <button class="big-btn bw-l"><svg class="mt-1" width="31" height="26" viewBox="0 0 31 26"><use href="#cfmt" width="31" height="28"/></svg><span class="lbl">セルの<br><span class="tight">スタイル</span> <svg class="d-inline" width="8" height="8"><use href="#cv"/></svg></span></button>
  </div>
  <div class="rlabel text-center">スタイル</div>
 </section>
 <section class="rgroup w-cell">
  <div class="rbody d-flex ps-2">
   <button class="big-btn bw-s"><svg class="my-1" width="32" height="22"><use href="#cins"/></svg><span class="lbl">挿入</span><svg class="mt-1" width="8" height="8"><use href="#cv"/></svg></button>
   <button class="big-btn bw-s"><svg class="my-1" width="30" height="22"><use href="#cdel"/></svg><span class="lbl">削除</span><svg class="mt-1" width="8" height="8"><use href="#cv"/></svg></button>
   <button class="big-btn bw-s pt-0"><svg class="mt-1" width="28" height="28"><use href="#cform"/></svg><span class="lbl">書式</span><svg class="mt-1" width="8" height="8"><use href="#cv"/></svg></button>
  </div>
  <div class="rlabel text-center">セル</div>
 </section>
 <section class="rgroup w-edit">
  <div class="rbody d-flex ps-2">
   <div class="ps-1 edit-col">
    <div class="d-flex"><button class="row-btn"><svg width="16" height="15"><use href="#sigma"/></svg>オート SUM</button><button class="cv ms-2" aria-label="集計方法"><svg width="8" height="8"><use href="#cv"/></svg></button></div>
    <button class="row-btn"><svg width="16" height="14"><use href="#fdown"/></svg><span class="tight">フィル</span><svg width="8" height="8"><use href="#cv"/></svg></button>
    <button class="row-btn"><svg width="16" height="16"><use href="#erase"/></svg><span class="tight">クリア</span><svg width="8" height="8"><use href="#cv"/></svg></button>
   </div>
   <button class="big-btn bw-m"><svg width="29" height="28"><use href="#sort"/></svg><span class="lbl2"><span class="tight">並べ替えと<br>フィルター</span> <svg class="d-inline" width="8" height="8"><use href="#cv"/></svg></span></button>
   <button class="big-btn bw-s"><svg width="30" height="30"><use href="#find"/></svg><span class="lbl">検索と<br>選択 <svg class="d-inline" width="8" height="8"><use href="#cv"/></svg></span></button>
  </div>
  <div class="rlabel text-center">編集</div>
 </section>
 <section class="rgroup w-addin">
  <div class="rbody"><button class="big-btn w-100"><svg width="28" height="28"><use href="#addin"/></svg><span class="lbl2">アド<br>イン</span></button></div>
  <div class="rlabel text-center">アドイン</div>
 </section>
 <section class="rgroup w-data">
  <div class="rbody d-flex ps-2">
   <button class="big-btn bw-s"><svg width="28" height="28"><use href="#anal"/></svg><span class="lbl2">データ<br>分析</span></button>
   <button class="big-btn bw-s"><svg width="30" height="28"><use href="#copi"/></svg><span class="lbl2">Copilot</span></button>
  </div>
 </section>
 <section class="rgroup w-labs">
  <div class="rbody"><button class="big-btn w-100"><svg width="26" height="28"><use href="#flask"/></svg><span class="lbl2">Excel<br>Labs</span></button></div>
  <div class="rlabel text-center text-nowrap">Excel Labs</div>
 </section>
 <button class="ms-auto align-self-end me-2 pe-1 mb-1" aria-label="リボンを折りたたむ"><svg width="11" height="11" viewBox="0 0 12 12"><path d="M1 8.500 6 3.500l5 5" stroke-width="1.200"/></svg></button>
</div>

<div class="fbar d-flex align-items-center">
 <div class="fbox namebox d-flex align-items-center"><input class="flex-fill" value="A2" aria-label="名前ボックス"><button aria-label="名前の一覧"><svg width="12" height="12"><use href="#cvb"/></svg></button></div>
 <span class="fdots">⋮</span>
 <div class="fbox fxbox d-flex align-items-center gap-2"><button aria-label="キャンセル"><svg width="13" height="13" viewBox="0 0 14 14"><path d="M1 1l12 12M13 1 1 13" stroke="#b5b5b5"/></svg></button><button aria-label="入力"><svg width="15" height="12" viewBox="0 0 16 12"><path d="M1 6l5 5L15 1" stroke="#b5b5b5"/></svg></button><button class="fxmark">fx</button><svg class="opacity-50 ms-auto" width="8" height="8"><use href="#cvb"/></svg></div>
 <div class="fbox flex-fill d-flex align-items-center pe-1 ms-1"><input class="flex-fill g12" value="上野" aria-label="数式バー"><button aria-label="数式バーの展開"><svg width="11" height="11"><use href="#cvb"/></svg></button></div>
</div>

<main class="d-flex">
 <div class="sheet-area flex-fill">
  <table class="grid" id="grid"></table>
  <div class="ants"></div>
 </div>
 <div class="vscroll d-flex justify-content-center"><div class="vtrack d-flex flex-column align-items-center py-1">
  <svg class="mb-1" width="9" height="9" viewBox="0 0 9 9"><path d="M4.500 1 9 8H0z" fill="#666" stroke="none"/></svg><div class="vthumb"></div><svg class="mt-auto" width="9" height="9" viewBox="0 0 9 9"><path d="M4.500 8 9 1H0z" fill="#666" stroke="none"/></svg></div></div>
</main>

<div class="sheetbar d-flex align-items-center">
 <button class="nav-l" aria-label="前のシート"><svg width="7" height="10" viewBox="0 0 7 10"><path d="M6 .500 1 5l5 4.500" stroke="#999" stroke-width="1.200"/></svg></button>
 <button class="nav-r" aria-label="次のシート"><svg width="7" height="10" viewBox="0 0 7 10"><path d="M1 .500 6 5 1 9.500" stroke="#999" stroke-width="1.200"/></svg></button>
 <a class="sheet-tab d-flex justify-content-center align-items-center align-self-start ms-5" href="#"><span>Sheet1</span></a>
 <i class="vsep"></i>
 <button class="nav-add" aria-label="新しいシート"><svg width="12" height="12" viewBox="0 0 12 12"><path d="M6 0v12M0 6h12"/></svg></button>
 <span class="ms-auto me-2 fdots">⋮</span>
 <div class="hscroll d-flex align-items-center"><svg width="7" height="9" viewBox="0 0 7 9"><path d="M0 4.500 7 0v9z" fill="#666" stroke="none"/></svg><div class="hthumb"></div><svg class="ms-auto" width="7" height="9" viewBox="0 0 7 9"><path d="M7 4.500 0 0v9z" fill="#666" stroke="none"/></svg></div>
</div>

<footer class="statusbar d-flex align-items-center">
 <span class="me-auto tight">コピー先を選択し、Enter キーを押すか、貼り付けを選択します。</span>
 <span class="me-3">データの個数: 72</span>
 <button class="view-btn on" aria-label="標準"><svg width="13" height="13" viewBox="0 0 13 13"><path d="M.500.500h12v12H.500zM.500 4.500h12M.500 8.500h12M4.500.500v12M8.500.500v12" stroke="#111"/></svg></button>
 <button class="view-btn" aria-label="ページ レイアウト"><svg width="14" height="13" viewBox="0 0 14 13"><path d="M.500.500h13v12H.500zM3.500 2.500h7v8h-7zM5 4.500h4M5 6.500h4M5 8.500h4" stroke="#111"/></svg></button>
 <button class="view-btn" aria-label="改ページ"><svg width="14" height="13" viewBox="0 0 14 13"><path d="M.500.500h13v12H.500zM4.500.500v7M9.500.500v7M.500 7.500h9" stroke="#111"/></svg></button>
 <button class="ms-2" aria-label="縮小">−</button><input class="zoom-range" type="range" min="0" max="100" value="50" aria-label="ズーム"><button aria-label="拡大">＋</button>
 <span class="ms-2 text-end pct-label">100%</span>
</footer>

<div class="mini">
 <div class="mini-row"><select class="combo c-mini" aria-label="フォント"><option>游ゴシック</option></select><select class="combo c-msize" aria-label="サイズ"><option>11</option></select><button class="ib" aria-label="拡大"><svg width="16" height="14"><use href="#Aup"/></svg></button><button class="ib ib24" aria-label="縮小"><svg width="16" height="14"><use href="#Adn"/></svg></button><button class="ib ib24" aria-label="通貨"><svg width="17" height="14"><use href="#money"/></svg></button><button class="cv slim" aria-label="通貨の選択"><svg width="8" height="8"><use href="#cv"/></svg></button><button class="ib" aria-label="パーセント"><svg width="15" height="14"><use href="#pct"/></svg></button><button class="ib ib24" aria-label="桁区切り"><svg width="8" height="13"><use href="#comma"/></svg></button><button class="ib ib24" aria-label="結合"><svg width="16" height="16"><use href="#merge"/></svg></button></div>
 <div class="mini-row"><button class="ib fw-bold ib20">B</button><button class="ib ital">I</button><button class="ib ib24" aria-label="中央揃え"><svg width="14" height="14"><use href="#al-c"/></svg></button><button class="ib ib24" aria-label="塗りつぶし"><svg width="16" height="16"><use href="#fill"/></svg></button><button class="cv slim" aria-label="塗りつぶしの色"><svg width="8" height="8"><use href="#cv"/></svg></button><button class="ib" aria-label="文字色"><svg width="16" height="16"><use href="#fcol"/></svg></button><button class="cv slim" aria-label="文字色の選択"><svg width="8" height="8"><use href="#cv"/></svg></button><button class="ib ib24" aria-label="罫線"><svg width="16" height="16"><use href="#border"/></svg></button><button class="cv slim" aria-label="罫線の種類"><svg width="8" height="8"><use href="#cv"/></svg></button><button class="ib ib24" aria-label="小数点以下を増やす"><svg width="16" height="16"><use href="#dec-l"/></svg></button><button class="ib ib24" aria-label="小数点以下を減らす"><svg width="16" height="16"><use href="#dec-r"/></svg></button><button class="ib ib24" aria-label="書式のコピー"><svg width="16" height="16"><use href="#brush"/></svg></button></div>
</div>

<div class="ctx" role="menu">
 <input class="ctx-search" placeholder="メニューの検索" aria-label="メニューの検索">
 <button class="mi"><span class="ic"><svg width="16" height="16"><use href="#cut"/></svg></span><span>切り取り(<u>T</u>)</span></button>
 <button class="mi"><span class="ic"><svg width="17" height="17"><use href="#copy"/></svg></span><span>コピー(<u>C</u>)</span></button>
 <div class="mi head"><span class="ic"><svg width="17" height="18"><use href="#board-s"/></svg></span><span>貼り付けのオプション:</span></div>
 <div class="opts">
  <button aria-label="貼り付け"><svg width="20" height="23" viewBox="0 0 20 23"><use href="#clip" width="20" height="23"/><path d="M10.500 9.500h8v12h-8z" fill="#fff"/></svg></button>
  <button aria-label="値"><svg width="20" height="23" viewBox="0 0 20 23"><use href="#clip" width="20" height="23"/><path d="M6 13h14v9H6z" fill="#fff" stroke="none"/><text x="5" y="22" font-size="9">123</text></svg></button>
  <button aria-label="数式"><svg width="20" height="23" viewBox="0 0 20 23"><use href="#clip" width="20" height="23"/><path d="M8 9h12v13H8z" fill="#fff" stroke="none"/><text x="8" y="20" font-size="15" font-style="italic" font-family="Liberation Serif">fx</text></svg></button>
  <button aria-label="行/列の入れ替え"><svg width="20" height="23" viewBox="0 0 20 23"><use href="#clip" width="20" height="23"/><path d="M7 11h13v11H7z" fill="#fff" stroke="none"/><path d="M12 21V13h7M9 18l3 3 3-3M16.500 10l3 3-3 3" stroke="#1e88d0" stroke-width="1.300"/></svg></button>
  <button aria-label="書式設定"><svg width="20" height="23" viewBox="0 0 20 23"><use href="#clip" width="20" height="23"/><circle cx="5" cy="9.500" r="1.500" stroke="#1e88d0"/><circle cx="10" cy="13" r="1.500" stroke="#1e88d0"/><path d="M10 8 5 14" stroke="#1e88d0"/><svg x="3" y="7" width="18" height="16"><use href="#pbrush"/></svg></svg></button>
  <button aria-label="リンク貼り付け"><svg width="20" height="23" viewBox="0 0 20 23"><use href="#clip" width="20" height="23"/><path d="M6 12h14v10H6z" fill="#fff" stroke="none"/><svg class="blu" x="5" y="12" width="15" height="11"><use href="#link"/></svg></svg></button>
 </div>
 <button class="mi"><span class="ic"></span><span>形式を選択して貼り付け(<u>S</u>)...</span><span class="go split"><svg width="7" height="11"><use href="#cvr"/></svg></span></button>
 <div class="mhr"></div>
 <button class="mi"><span class="ic"><svg width="17" height="16"><use href="#cop-s"/></svg></span><span>Copilot(<u>C</u>)</span><span class="go"><svg width="7" height="11"><use href="#cvr"/></svg></span></button>
 <button class="mi tight"><span class="ic"></span><span>コピーしたセルの挿入(<u>E</u>)...</span></button>
 <button class="mi"><span class="ic"></span><span>削除(<u>D</u>)...</span></button>
 <button class="mi tight"><span class="ic"></span><span>数式と値のクリア(<u>N</u>)</span></button>
 <div class="mhr"></div>
 <button class="mi"><span class="ic"><svg width="17" height="16"><use href="#trans"/></svg></span><span>翻訳</span></button>
 <div class="mhr"></div>
 <button class="mi tight"><span class="ic"><svg width="17" height="16"><use href="#quick"/></svg></span><span>クイック分析(<u>Q</u>)</span></button>
 <button class="mi tight"><span class="ic"></span><span>フィルター(<u>E</u>)</span><span class="go"><svg width="7" height="11"><use href="#cvr"/></svg></span></button>
 <button class="mi"><span class="ic"></span><span>並べ替え(<u>O</u>)</span><span class="go"><svg width="7" height="11"><use href="#cvr"/></svg></span></button>
 <div class="mhr"></div>
 <button class="mi tight"><span class="ic"><svg width="16" height="16"><use href="#tget"/></svg></span><span>テーブルまたは範囲からデータを取得(<u>G</u>)...</span></button>
 <div class="mhr"></div>
 <button class="mi tight"><span class="ic"><svg width="17" height="16"><use href="#ncom"/></svg></span><span>新しいコメント(<u>M</u>)</span></button>
 <button class="mi tight"><span class="ic"><svg width="17" height="16"><use href="#nmemo"/></svg></span><span>新しいメモ(<u>N</u>)</span></button>
 <div class="mhr"></div>
 <button class="mi"><span class="ic"><svg width="16" height="16"><use href="#cellf"/></svg></span><span>セルの書式設定(<u>F</u>)...</span></button>
 <button class="mi tight"><span class="ic"></span><span>ドロップダウン リストから選択(<u>K</u>)...</span></button>
 <button class="mi tight"><span class="ic"><svg width="16" height="16"><use href="#ruby"/></svg></span><span>ふりがなの表示(<u>S</u>)</span></button>
 <button class="mi"><span class="ic"></span><span>名前の定義(<u>A</u>)...</span></button>
 <div class="mhr"></div>
 <button class="mi tight"><span class="ic"><svg width="16" height="12"><use href="#link"/></svg></span><span>リンク(<u>I</u>)</span><span class="go split"><svg width="7" height="11"><use href="#cvr"/></svg></span></button>
 <button class="mi tight" disabled><span class="ic"></span><span>ハイパーリンクを開く(<u>O</u>)</span></button>
 <div class="mhr"></div>
 <button class="mi tight"><span class="ic"><svg width="17" height="16"><use href="#rlink"/></svg></span><span>この範囲にリンクする(<u>L</u>)</span></button>
</div>
<div class="mark-box"></div>
<svg class="mark-num" width="50" height="50" viewBox="0 0 50 50"><text x="25" y="42" text-anchor="middle">⑪</text></svg>
</div>

<script>
const letters = [..."ABCDEFGHIJKLMNOPQRSTUVWXY", ""];
const widths = ["k-a", "k-a", "k-c", "k-d"];
const branch = r => r < 14 ? "上野" : r < 26 ? "新宿" : "渋谷";
const staff = ["清水", "渡辺", "大場", "野田", "緑川", "杉浦", "前田", "設楽"];
const person = r => r < 30 ? staff[Math.floor((r - 2) / 4)] : "設楽";
const extra = {2: ["家電", 18], 31: ["美容", 15]};
let html = '<colgroup><col class="k-rh">' + letters.map((l, i) => `<col class="${widths[i] || (l ? "k-n" : "")}">`).join("") + "</colgroup>";
html += '<thead><tr><th><svg class="ms-auto me-1" width="16" height="16" viewBox="0 0 16 16"><path d="M16 0v16H0z" fill="#b5b5b5" stroke="none"/></svg></th>' +
  letters.map((l, i) => `<th class="${i < 2 ? "hot" : ""}">${l}</th>`).join("") + "</tr></thead><tbody>";
for (let r = 1; r <= 31; r++) {
  html += `<tr class="${r > 1 ? "hot" : ""}"><th>${r}</th>` + letters.map((l, i) => {
    if (r === 1) return i < 4 ? `<td class="cap">${["支店", "担当", "分類", "数量"][i]}</td>` : "<td></td>";
    if (i === 0) return `<td class="sel ${r === 2 ? "cur" : ""}">${branch(r)}</td>`;
    if (i === 1) return `<td class="sel">${person(r)}</td>`;
    if (extra[r] && (i === 2 || i === 3)) return `<td class="${i === 3 ? "text-end" : ""}">${extra[r][i - 2]}</td>`;
    return "<td></td>";
  }).join("") + "</tr>";
}
document.getElementById("grid").innerHTML = html + "</tbody>";
</script>
<script src="https://cdn.jsdelivr.net/npm/bootstrap@5.3.0/dist/js/bootstrap.bundle.min.js"></script>
</body>
</html>
